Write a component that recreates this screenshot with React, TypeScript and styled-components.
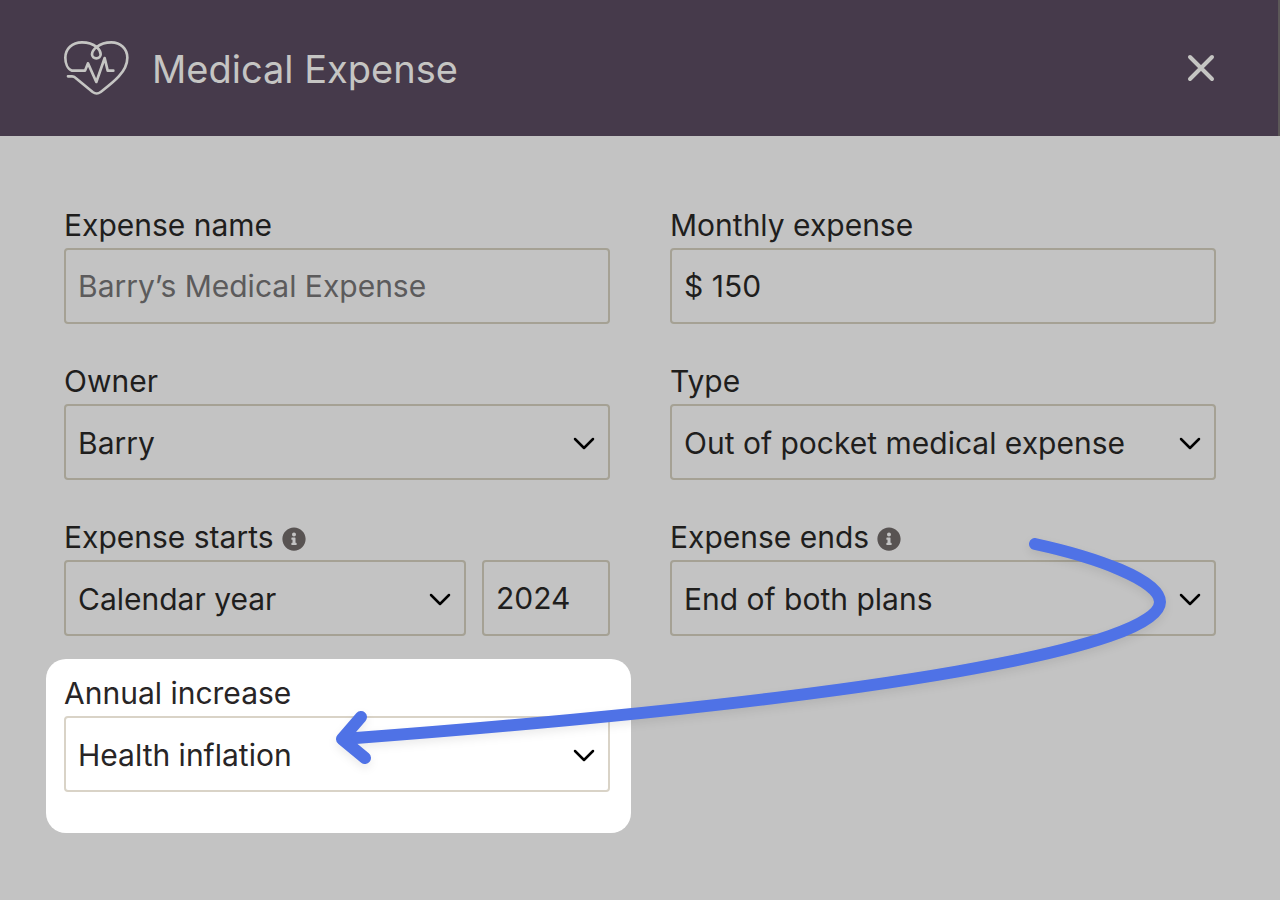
import React from "react";
import styled, { createGlobalStyle } from "styled-components";
import { FaInfoCircle } from "react-icons/fa";

const GlobalStyle = createGlobalStyle`
  *, *::before, *::after { box-sizing: border-box; }
  body {
    margin: 0;
    background: #c3c3c3;
    color: #1f1e1d;
    font-family: Inter, "Liberation Sans", sans-serif;
    font-size: 30px;
    line-height: 40px;
  }
`;

const Dialog = styled.main`
  min-height: 100vh;
  display: flex;
  flex-direction: column;
`;

const Header = styled.header`
  display: flex;
  align-items: center;
  gap: 22px;
  height: 136px;
  padding: 0 62px;
  background: #463a4b;
  border-right: 2px solid #5c5858;
  color: #c5c5c3;
`;

const HeartIcon = styled.svg`
  width: 68px;
  height: 58px;
  flex: none;
`;

const Title = styled.h1`
  flex: 1;
  margin: 0;
  padding-top: 2px;
  font-size: 38px;
  line-height: 48px;
  font-weight: 400;
`;

const CloseButton = styled.button`
  display: flex;
  padding: 0;
  border: 0;
  background: none;
  color: inherit;
  cursor: pointer;
`;

const Form = styled.form`
  position: relative;
  flex: 1;
  display: grid;
  grid-template-columns: 1fr 1fr;
  align-content: start;
  gap: 40px 60px;
  padding: 72px 64px 64px;
`;

const Field = styled.div<{ $highlight?: boolean }>`
  min-width: 0;
  ${(p) =>
    p.$highlight &&
    `
    margin: -17px -21px 0 -18px;
    padding: 17px 21px 41px 18px;
    border-radius: 20px;
    background: #ffffff;
    color: #282526;
  `}
`;

const LabelRow = styled.div`
  display: flex;
  align-items: center;
  gap: 8px;
  height: 40px;
  padding-bottom: 2px;
`;

const LabelText = styled.label`
  padding-bottom: 4px;
`;

const InfoButton = styled.button`
  display: flex;
  padding: 0;
  border: 0;
  background: none;
  color: #585352;
  font-size: 24px;
`;

const Controls = styled.div`
  display: flex;
  gap: 16px;
`;

const TextInput = styled.input<{ $width?: string }>`
  flex: ${(p) => (p.$width ? `0 0 ${p.$width}` : "1")};
  min-width: 0;
  height: 76px;
  padding: 0 12px;
  border: 2px solid #a5a194;
  border-radius: 4px;
  background: transparent;
  color: inherit;
  font: inherit;

  &::placeholder {
    color: #5c5b5c;
    opacity: 1;
  }
`;

const SelectBox = styled.div`
  flex: 1;
  min-width: 0;
  display: grid;
  align-items: center;
`;

const Select = styled.select<{ $light?: boolean }>`
  grid-area: 1 / 1;
  width: 100%;
  height: 76px;
  padding: 2px 48px 0 12px;
  border: 2px solid ${(p) => (p.$light ? "#d9d3c7" : "#a5a194")};
  border-radius: 4px;
  background: transparent;
  color: inherit;
  font: inherit;
  appearance: none;
`;

const Chevron = styled.svg`
  grid-area: 1 / 1;
  justify-self: end;
  width: 24px;
  height: 16px;
  margin-right: 14px;
  pointer-events: none;
`;

/* Annotation arrow drawn over the fields. */
const Arrow = styled.svg`
  position: absolute;
  top: 394px;
  left: 25%;
  width: 67.5%;
  pointer-events: none;
  filter: drop-shadow(0 4px 4px rgba(0, 0, 0, 0.08));
`;

type DropdownProps = { id: string; value: string; light?: boolean };

function Dropdown({ id, value, light }: DropdownProps) {
  return (
    <SelectBox>
      <Select id={id} defaultValue={value} $light={light}>
        <option>{value}</option>
      </Select>
      <Chevron viewBox="0 0 24 16" fill="none" stroke="#000" strokeWidth="2.5" strokeLinecap="round" strokeLinejoin="round" aria-hidden="true">
        <path d="M3 5 L12 14 L21 5" />
      </Chevron>
    </SelectBox>
  );
}

type LabelProps = { htmlFor: string; text: string; info?: boolean };

function FieldLabel({ htmlFor, text, info }: LabelProps) {
  return (
    <LabelRow>
      <LabelText htmlFor={htmlFor}>{text}</LabelText>
      {info && (
        <InfoButton type="button" aria-label={`About ${text}`}>
          <FaInfoCircle />
        </InfoButton>
      )}
    </LabelRow>
  );
}

export default function App() {
  return (
    <>
      <GlobalStyle />
      <Dialog>
        <Header>
          <HeartIcon viewBox="36 42 204 174" fill="none" stroke="currentColor" strokeWidth="8" strokeLinecap="round" strokeLinejoin="round" aria-hidden="true">
            <path d="M190 137 H173 L164 99 L139 171 L114 115 L105 137 H66 C52 132 46 114 46 98 C46 72 66 52 96 52 C118 52 130 58 140 66 C148 73 152 81 152 88 C152 95 146 100 139 100 C132 100 126 95 126 88 C126 81 131 73 140 66 C150 58 164 52 184 52 C212 52 232 72 232 98 C232 140 190 172 152 201 Q140 210 128 201 L76 158 Q72 154 66 154 H54" />
          </HeartIcon>
          <Title>Medical Expense</Title>
          <CloseButton type="button" aria-label="Close">
            <svg width="30" height="30" viewBox="0 0 30 30" fill="none" stroke="currentColor" strokeWidth="4" strokeLinecap="round" aria-hidden="true">
              <path d="M4 4 L26 26 M26 4 L4 26" />
            </svg>
          </CloseButton>
        </Header>
        <Form>
          <Field>
            <FieldLabel htmlFor="name" text="Expense name" />
            <Controls>
              <TextInput id="name" type="text" placeholder="Barry’s Medical Expense" />
            </Controls>
          </Field>
          <Field>
            <FieldLabel htmlFor="monthly" text="Monthly expense" />
            <Controls>
              <TextInput id="monthly" type="text" defaultValue="$ 150" />
            </Controls>
          </Field>
          <Field>
            <FieldLabel htmlFor="owner" text="Owner" />
            <Controls>
              <Dropdown id="owner" value="Barry" />
            </Controls>
          </Field>
          <Field>
            <FieldLabel htmlFor="type" text="Type" />
            <Controls>
              <Dropdown id="type" value="Out of pocket medical expense" />
            </Controls>
          </Field>
          <Field>
            <FieldLabel htmlFor="starts" text="Expense starts" info />
            <Controls>
              <Dropdown id="starts" value="Calendar year" />
              <TextInput type="text" defaultValue="2024" aria-label="Start year" $width="128px" />
            </Controls>
          </Field>
          <Field>
            <FieldLabel htmlFor="ends" text="Expense ends" info />
            <Controls>
              <Dropdown id="ends" value="End of both plans" />
            </Controls>
          </Field>
          <Field $highlight>
            <FieldLabel htmlFor="increase" text="Annual increase" />
            <Controls>
              <Dropdown id="increase" value="Health inflation" light />
            </Controls>
          </Field>
          <Arrow viewBox="320 530 864 250" fill="none" stroke="#4f72e6" strokeWidth="12" strokeLinecap="round" strokeLinejoin="round" aria-hidden="true">
            <path d="M1035 544 C1095 557 1160 580 1160 602 C1160 646 890 698 343 739" />
            <path d="M361 717 L342 739 L365 758" />
          </Arrow>
        </Form>
      </Dialog>
    </>
  );
}
